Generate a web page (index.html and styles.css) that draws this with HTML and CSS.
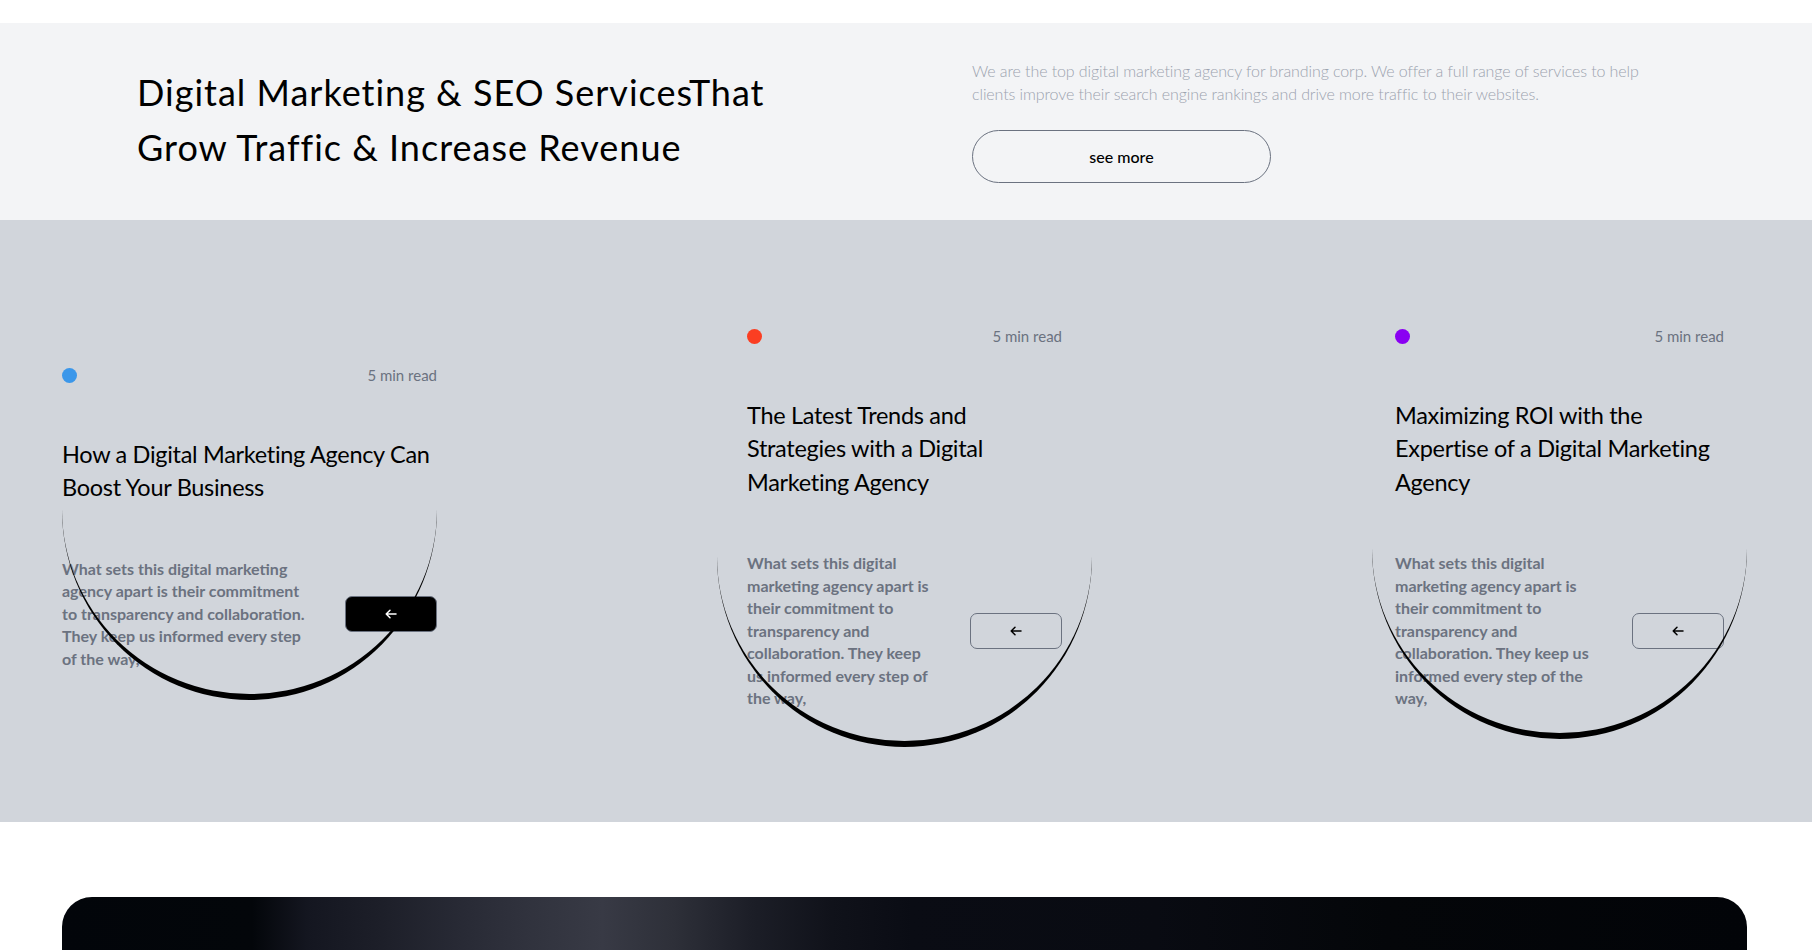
FILE: index.html
```html
<!DOCTYPE html>
<html lang="en">
<head>
<meta charset="utf-8">
<title>Digital Marketing &amp; SEO Services</title>
<link rel="stylesheet" href="styles.css">
</head>
<body>
<section class="hero">
  <h1 class="hero-title">Digital Marketing &amp; SEO ServicesThat Grow Traffic &amp; Increase Revenue</h1>
  <div class="hero-side">
    <p class="hero-text">We are the top digital marketing agency for branding corp. We offer a full range of services to help clients improve their search engine rankings and drive more traffic to their websites.</p>
    <a class="pill-btn" href="#">see more</a>
  </div>
</section>

<section class="posts">
  <article class="post post--active">
    <div class="post-meta"><span class="dot dot--blue"></span><span class="read">5 min read</span></div>
    <h3 class="post-title">How a Digital Marketing Agency Can Boost Your Business</h3>
    <div class="post-body">
      <p class="post-text">What sets this digital marketing agency apart is their commitment to transparency and collaboration. They keep us informed every step of the way,</p>
      <a class="arrow-btn" href="#" aria-label="Read more"><svg width="12" height="10" viewBox="0 0 12 10" fill="none" stroke="currentColor" stroke-width="1.5" stroke-linecap="round" stroke-linejoin="round"><path d="M11 5H1.2M5 1.2L1.2 5 5 8.8"/></svg></a>
    </div>
  </article>

  <article class="post post--b">
    <div class="post-meta"><span class="dot dot--red"></span><span class="read">5 min read</span></div>
    <h3 class="post-title">The Latest Trends and Strategies with a Digital Marketing Agency</h3>
    <div class="post-body">
      <p class="post-text">What sets this digital marketing agency apart is their commitment to transparency and collaboration. They keep us informed every step of the way,</p>
      <a class="arrow-btn" href="#" aria-label="Read more"><svg width="12" height="10" viewBox="0 0 12 10" fill="none" stroke="currentColor" stroke-width="1.5" stroke-linecap="round" stroke-linejoin="round"><path d="M11 5H1.2M5 1.2L1.2 5 5 8.8"/></svg></a>
    </div>
  </article>

  <article class="post post--c">
    <div class="post-meta"><span class="dot dot--purple"></span><span class="read">5 min read</span></div>
    <h3 class="post-title">Maximizing ROI with the Expertise of a Digital Marketing Agency</h3>
    <div class="post-body">
      <p class="post-text">What sets this digital marketing agency apart is their commitment to transparency and collaboration. They keep us informed every step of the way,</p>
      <a class="arrow-btn" href="#" aria-label="Read more"><svg width="12" height="10" viewBox="0 0 12 10" fill="none" stroke="currentColor" stroke-width="1.5" stroke-linecap="round" stroke-linejoin="round"><path d="M11 5H1.2M5 1.2L1.2 5 5 8.8"/></svg></a>
    </div>
  </article>
</section>

<section class="cta">
  <div class="cta-box"></div>
</section>
</body>
</html>
```

FILE: styles.css
```css
* { box-sizing: border-box; }

body {
  margin: 0;
  background: #ffffff;
  color: #000000;
  font-family: Lato, "Open Sans", "Liberation Sans", sans-serif;
}

/* ---------- hero ---------- */
.hero {
  margin-top: 23px;
  height: 197px;
  background: #f3f4f6;
  display: grid;
  grid-template-columns: 705px 1fr;
  column-gap: 130px;
  align-items: center;
  padding: 0 150px 0 137px;
}

.hero-title {
  margin: 0 0 4px;
  font-size: 36px;
  font-weight: 400;
  line-height: 55px;
  letter-spacing: 1px;
  color: #000;
}

.hero-text {
  margin: 0;
  font-size: 16px;
  font-weight: 300;
  line-height: 22.7px;
  letter-spacing: -0.1px;
  color: #9ca3af;
}

.pill-btn {
  display: flex;
  align-items: center;
  justify-content: center;
  width: 299px;
  height: 53px;
  margin-top: 25px;
  border: 1px solid #6b7280;
  border-radius: 999px;
  font-size: 16px;
  font-weight: 500;
  color: #000;
  text-decoration: none;
}

/* ---------- posts ---------- */
.posts {
  background: #d1d5db;
  height: 602px;
  display: flex;
  justify-content: space-between;
  align-items: center;
  padding: 0 65px 7px 62px;
}

.post {
  position: relative;
  width: 375px;
}

.post--b { padding: 0 30px; }
.post--c { padding: 0 23px; }

.post::after {
  content: "";
  position: absolute;
  left: 0;
  bottom: -30px;
  width: 375px;
  height: 375px;
  border-bottom: 6px solid #000;
  border-radius: 50%;
  pointer-events: none;
}

.post--b::after { bottom: -38px; }

.post-meta {
  display: flex;
  justify-content: space-between;
  align-items: center;
  height: 21px;
}

.dot {
  width: 15px;
  height: 15px;
  border-radius: 50%;
}
.dot--blue { background: #3b97ea; }
.dot--red { background: #fb3e22; }
.dot--purple { background: #8a00f2; }

.read {
  font-size: 15px;
  line-height: 21px;
  color: #6b7280;
}

.post-title {
  margin: 52px 0 0;
  font-size: 23.5px;
  font-weight: 400;
  line-height: 33.6px;
  letter-spacing: -0.3px;
  color: #000;
}

.post-body {
  margin-top: 53px;
  display: flex;
  align-items: center;
  gap: 32px;
}

.post-text {
  flex: 1;
  margin: 0;
  font-size: 16px;
  font-weight: 700;
  line-height: 22.4px;
  color: #6b7280;
}

.arrow-btn {
  flex: 0 0 92px;
  height: 36px;
  display: flex;
  align-items: center;
  justify-content: center;
  border: 1px solid #6b7280;
  border-radius: 7px;
  color: #000;
}

.post--active .arrow-btn {
  background: #000;
  color: #fff;
}

/* ---------- cta ---------- */
.cta {
  padding: 75px 65px 0 62px;
}

.cta-box {
  height: 220px;
  border-radius: 30px;
  background: linear-gradient(90deg,
    #02050a 0px,
    #03060a 190px,
    #141620 245px,
    #1d1f29 320px,
    #282a35 400px,
    #31333e 470px,
    #383a45 540px,
    #2e3039 610px,
    #1c1e27 690px,
    #10121a 770px,
    #0a0c14 850px,
    #090b12 1094px,
    #040609 1325px,
    #020408 100%);
}
```
